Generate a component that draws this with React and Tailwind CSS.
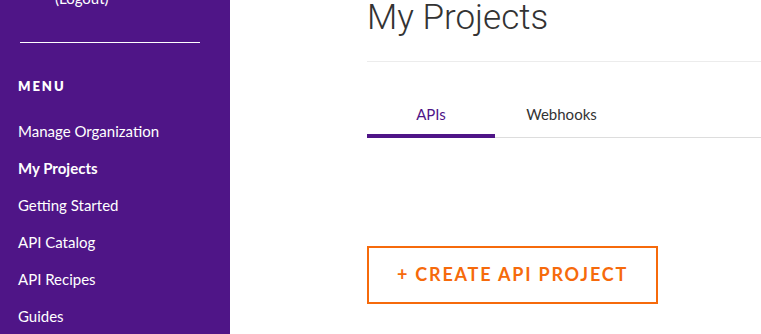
import React from "react";

const menu = [
  { label: "Manage Organization" },
  { label: "My Projects", active: true },
  { label: "Getting Started" },
  { label: "API Catalog" },
  { label: "API Recipes" },
  { label: "Guides" },
];

const App = () => {
  return (
    <div className="flex h-[334px] w-[761px] overflow-hidden bg-white" style={{ fontFamily: "Lato, 'Noto Sans', sans-serif" }}>
      {/* Sidebar */}
      <aside className="w-[230px] shrink-0 bg-[#4f1587] text-white">
        <div className="-mt-[12px] pl-[55px] text-[15px] leading-5">(Logout)</div>
        <div className="ml-5 mt-[34px] h-px w-[180px] bg-white"></div>
        <div className="mt-[35px] pl-[18px] text-[13px] font-extrabold leading-4 tracking-[0.15em]">MENU</div>
        <nav className="mt-[27px] flex flex-col gap-[17px] pl-[18px]">
          {menu.map((m, idx) => (
            <a key={idx} href="#" className={`text-[15px] leading-5 ${m.active ? "font-bold" : ""}`}>
              {m.label}
            </a>
          ))}
        </nav>
      </aside>

      {/* Main */}
      <main className="flex-1 pl-[137px]">
        <h1 className="-mt-[2px] text-[35px] font-light leading-10 text-[#333]" style={{ fontFamily: "Roboto, sans-serif" }}>
          My Projects
        </h1>
        <div className="mt-[23px] h-px bg-[#ececec]"></div>

        <div className="mt-[41px] flex border-b border-[#dddddd]">
          <button className="-mb-px w-[128px] border-b-4 border-[#4f1587] pb-[8px] text-[15px] text-[#4f1587]">APIs</button>
          <button className="w-[133px] pb-[11px] text-[15px] text-[#333]">Webhooks</button>
        </div>

        <button className="mt-[108px] h-[58px] w-[291px] border-2 border-[#f66a0b] text-[18px] font-bold tracking-[0.1em] text-[#f66a0b]">
          + CREATE API PROJECT
        </button>
      </main>
    </div>
  );
};

export default App;
